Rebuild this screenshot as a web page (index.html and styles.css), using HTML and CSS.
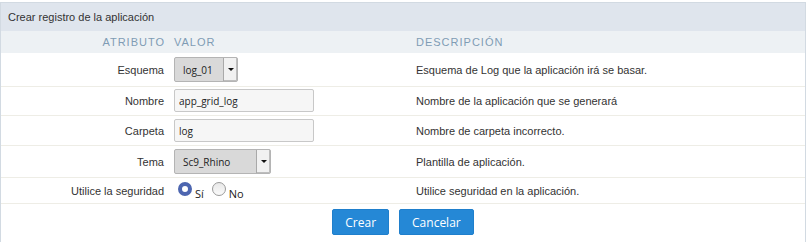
FILE: index.html
```html
<!DOCTYPE html>
<html lang="es">
<head>
    <meta charset="UTF-8">
    <title>Crear registro de la aplicación</title>
    <link rel="stylesheet" href="styles.css">
</head>
<body>
    <div class="panel">
        <div class="panel-title">Crear registro de la aplicación</div>
        <div class="row head">
            <div class="label">ATRIBUTO</div>
            <div>VALOR</div>
            <div>DESCRIPCIÓN</div>
        </div>
        <div class="row first">
            <div class="label">Esquema</div>
            <div>
                <span class="select small">
                    <select><option>log_01</option></select>
                    <span class="arrow"></span>
                </span>
            </div>
            <div class="desc">Esquema de Log que la aplicación irá se basar.</div>
        </div>
        <div class="row tight">
            <div class="label">Nombre</div>
            <div><input type="text" class="field" value="app_grid_log"></div>
            <div class="desc">Nombre de la aplicación que se generará</div>
        </div>
        <div class="row">
            <div class="label">Carpeta</div>
            <div><input type="text" class="field" value="log"></div>
            <div class="desc">Nombre de carpeta incorrecto.</div>
        </div>
        <div class="row">
            <div class="label">Tema</div>
            <div>
                <span class="select wide">
                    <select><option>Sc9_Rhino</option></select>
                    <span class="arrow"></span>
                </span>
            </div>
            <div class="desc">Plantilla de aplicación.</div>
        </div>
        <div class="row radios">
            <div class="label">Utilice la seguridad</div>
            <div class="options">
                <label><input type="radio" name="seg" checked><span>Sí</span></label>
                <label><input type="radio" name="seg"><span>No</span></label>
            </div>
            <div class="desc">Utilice seguridad en la aplicación.</div>
        </div>
        <div class="actions">
            <button>Crear</button>
            <button>Cancelar</button>
        </div>
    </div>
</body>
</html>
```

FILE: styles.css
```css
body {
    margin: 2px 0 0 0;
    font-family: "Liberation Sans", Arial, sans-serif;
    font-size: 11px;
    color: #333;
    background: #fff;
}
.panel {
    width: 804px;
    height: 239px;
    border: 1px solid #d2dae2;
    border-bottom: none;
}
.panel-title {
    height: 28px;
    line-height: 28px;
    padding-left: 7px;
    background: #dfe5ed;
    color: #333;
}
.row {
    display: grid;
    grid-template-columns: 163px 232px 1fr;
    column-gap: 10px;
    align-items: center;
    padding: 3px 0;
    border-bottom: 1px solid #eeede6;
}
.row.first {
    padding: 4px 0;
}
.row.tight {
    padding: 2px 0 3px;
}
.row.head {
    height: 22px;
    padding: 0;
    border-bottom: none;
    background: #edf1f4;
    color: #7f9cb5;
    letter-spacing: 1px;
}
.label {
    text-align: right;
}
.row.head .label {
    margin-right: -1px;
}
.field {
    box-sizing: border-box;
    width: 140px;
    height: 23px;
    margin: 0;
    padding: 0 4px;
    border: 1px solid #c8c8c8;
    border-radius: 2px;
    background: #f6f6f6;
    font-family: "Open Sans", sans-serif;
    font-size: 10px;
    color: #222;
    outline: none;
}
.select {
    position: relative;
    display: inline-block;
    vertical-align: middle;
}
.select select {
    appearance: none;
    -webkit-appearance: none;
    box-sizing: border-box;
    height: 25px;
    margin: 0;
    padding: 0 0 0 8px;
    border: 1px solid #b4b4b4;
    border-radius: 2px;
    background: #d9d9d9;
    font-family: "Open Sans", sans-serif;
    font-size: 10px;
    color: #222;
    outline: none;
}
.select.small select {
    width: 64px;
}
.select.wide select {
    width: 97px;
}
.select .arrow {
    position: absolute;
    top: 1px;
    right: 1px;
    bottom: 1px;
    width: 13px;
    border-left: 1px solid #a9a9a9;
    background: #f1f1f1;
    box-shadow: inset -1px -1px 0 #bdbdbd;
}
.select .arrow::after {
    content: "";
    position: absolute;
    left: 4px;
    top: 10px;
    border-left: 3px solid transparent;
    border-right: 3px solid transparent;
    border-top: 3px solid #111;
}
.row.radios {
    height: 26px;
    box-sizing: border-box;
    padding: 0;
}
.options {
    display: flex;
    align-items: center;
    gap: 8px;
    padding-left: 4px;
    font-family: "Open Sans", sans-serif;
    font-size: 11px;
    color: #222;
}
.options label {
    display: flex;
    align-items: center;
    gap: 3px;
}
.options span {
    padding-top: 6px;
}
.options input {
    appearance: none;
    -webkit-appearance: none;
    box-sizing: border-box;
    width: 14px;
    height: 14px;
    margin: 0 0 4px 0;
    border: 1px solid #9a9a9a;
    border-radius: 50%;
    background: linear-gradient(#e8e8e8, #fafafa);
}
.options input:checked {
    border: 4px solid #4d66b0;
    background: #fff;
}
.actions {
    display: flex;
    justify-content: center;
    gap: 10px;
    padding-top: 5px;
}
.actions button {
    height: 26px;
    padding: 0 12px;
    border: 1px solid #1f7fcc;
    border-radius: 2px;
    background: #2588d6;
    color: #fff;
    font-family: "Open Sans", sans-serif;
    font-size: 12px;
    cursor: pointer;
}
```
